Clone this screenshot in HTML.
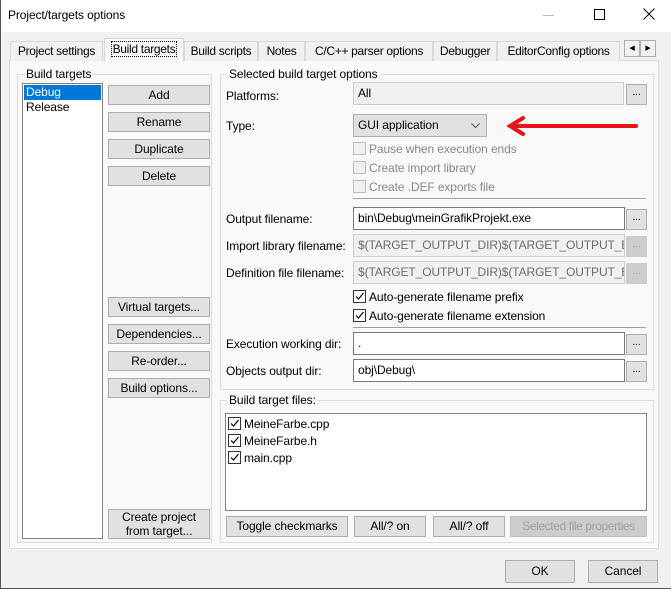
<!DOCTYPE html>
<html><head><meta charset="utf-8"><style>
*{box-sizing:border-box;margin:0;padding:0}
body{width:671px;height:589px;background:#f0f0f0;font-family:"Liberation Sans",sans-serif;font-size:12px;color:#000;position:relative;overflow:hidden;letter-spacing:-0.1px}
.a{position:absolute;white-space:nowrap}
.btn{position:absolute;background:#e1e1e1;border:1px solid #adadad;text-align:center;line-height:18px;white-space:nowrap}
.dis{color:#a0a0a0;background:#cccccc;border-color:#bfbfbf}
.grp{position:absolute;border:1px solid #dcdcdc}
.gl{position:absolute;background:#f9f9f9;padding:0 2px;top:-8px;left:6px;line-height:14px}
.in{position:absolute;background:#fff;border:1px solid #7a7a7a;height:23px;line-height:21px;padding-left:4px}
.ind{background:#f0f0f0;border-color:#cccccc;color:#6d6d6d}
.dot{position:absolute;width:21px;height:21px;background:#e1e1e1;border:1px solid #adadad;text-align:center;line-height:16px;font-size:10px}
.dotd{background:#cccccc;border-color:#cccccc;color:#a0a0a0}
.cb{position:absolute;width:13px;height:13px;border:1px solid #333;background:#fff}
.cbd{border-color:#bcbcbc;background:#f0f0f0}
.cb svg{position:absolute;left:0;top:0}
.tab{position:absolute;top:41px;height:20px;border:1px solid #d9d9d9;border-bottom:none;line-height:18px;text-align:center;background:#f0f0f0;overflow:hidden;white-space:nowrap;letter-spacing:-0.3px}
</style></head><body>
<div class="a" style="left:0;top:0;width:671px;height:32px;background:#fff"></div>
<div class="a" style="left:0;top:0;width:1px;height:589px;background:#555"></div>
<div class="a" style="left:0;top:588px;width:671px;height:1px;background:#555"></div>
<div class="a" style="left:8px;top:8px;font-size:12px">Project/targets options</div>
<div class="a" style="left:543px;top:15px;width:11px;height:1px;background:#bbb"></div>
<div class="a" style="left:594px;top:9px;width:11px;height:11px;border:1px solid #000"></div>
<svg class="a" style="left:643px;top:8px" width="12" height="12"><path d="M0.5 0.5 L11.5 11.5 M11.5 0.5 L0.5 11.5" stroke="#000" stroke-width="1"/></svg>

<div class="a" style="left:9px;top:60px;width:650px;height:489px;border:1px solid #d9d9d9;background:#f9f9f9"></div>
<div class="tab" style="left:10px;width:93px">Project settings</div>
<div class="tab" style="left:104px;width:80px;top:38px;height:24px;background:#f9f9f9;line-height:20px;z-index:2"><span style="border:1px dotted #000;padding:0 1px">Build targets</span></div>
<div class="tab" style="left:184px;width:74px">Build scripts</div>
<div class="tab" style="left:258px;width:47px">Notes</div>
<div class="tab" style="left:305px;width:128px">C/C++ parser options</div>
<div class="tab" style="left:433px;width:64px">Debugger</div>
<div class="tab" style="left:497px;width:123px">EditorConfig options</div>
<div class="a" style="left:624px;top:40px;width:16px;height:17px;border:1px solid #adadad;background:#f0f0f0;font-size:7px;text-align:center;line-height:15px">◀</div>
<div class="a" style="left:640px;top:40px;width:16px;height:17px;border:1px solid #adadad;background:#f0f0f0;font-size:7px;text-align:center;line-height:15px">▶</div>

<div class="grp" style="left:17px;top:74px;height:469px;width:195px"><div class="gl">Build targets</div></div>
<div class="a" style="left:22px;top:83px;width:81px;height:456px;background:#fff;border:1px solid #828282"></div>
<div class="a" style="left:24px;top:85px;width:77px;height:15px;background:#0078d7;color:#fff;padding-left:2px;line-height:15px">Debug</div>
<div class="a" style="left:26px;top:100px;line-height:15px">Release</div>
<div class="btn" style="left:108px;top:85px;width:102px;height:20px">Add</div>
<div class="btn" style="left:108px;top:112px;width:102px;height:20px">Rename</div>
<div class="btn" style="left:108px;top:139px;width:102px;height:20px">Duplicate</div>
<div class="btn" style="left:108px;top:166px;width:102px;height:20px">Delete</div>
<div class="btn" style="left:108px;top:297px;width:102px;height:20px">Virtual targets...</div>
<div class="btn" style="left:108px;top:324px;width:102px;height:20px">Dependencies...</div>
<div class="btn" style="left:108px;top:351px;width:102px;height:20px">Re-order...</div>
<div class="btn" style="left:108px;top:378px;width:102px;height:20px">Build options...</div>
<div class="btn" style="left:108px;top:509px;width:102px;height:30px;line-height:14px">Create project<br>from target...</div>

<div class="grp" style="left:220px;top:74px;width:434px;height:316px"><div class="gl">Selected build target options</div></div>
<div class="a" style="left:226px;top:89px">Platforms:</div>
<div class="in ind" style="left:353px;top:82px;width:271px;color:#000">All</div>
<div class="dot" style="left:626px;top:84px">...</div>
<div class="a" style="left:226px;top:119px">Type:</div>
<div class="a" style="left:353px;top:114px;width:134px;height:23px;background:#e1e1e1;border:1px solid #adadad;line-height:21px;padding-left:4px">GUI application<svg style="position:absolute;right:6px;top:8px" width="9" height="6"><path d="M0.5 0.5 L4.5 4.5 L8.5 0.5" fill="none" stroke="#555"/></svg></div>
<svg class="a" style="left:505px;top:116px" width="135" height="20"><line x1="10" y1="10" x2="131" y2="10" stroke="#e8141a" stroke-width="4" stroke-linecap="round"/><path d="M18 2 L5 10 L18 18" fill="none" stroke="#e8141a" stroke-width="4" stroke-linecap="round"/></svg>
<div class="cb cbd" style="left:353px;top:142px"></div><div class="a" style="left:369px;top:142px;color:#888">Pause when execution ends</div>
<div class="cb cbd" style="left:353px;top:161px"></div><div class="a" style="left:369px;top:161px;color:#888">Create import library</div>
<div class="cb cbd" style="left:353px;top:180px"></div><div class="a" style="left:369px;top:180px;color:#888">Create .DEF exports file</div>
<div class="a" style="left:353px;top:198px;width:293px;height:1px;background:#a0a0a0"></div>
<div class="a" style="left:226px;top:212px">Output filename:</div>
<div class="in" style="left:353px;top:207px;width:272px">bin\Debug\meinGrafikProjekt.exe</div>
<div class="dot" style="left:626px;top:209px">...</div>
<div class="a" style="left:226px;top:239px">Import library filename:</div>
<div class="in ind" style="left:353px;top:234px;width:272px;overflow:hidden">$(TARGET_OUTPUT_DIR)$(TARGET_OUTPUT_BASEN</div>
<div class="dot dotd" style="left:626px;top:236px">...</div>
<div class="a" style="left:226px;top:266px">Definition file filename:</div>
<div class="in ind" style="left:353px;top:261px;width:272px;overflow:hidden">$(TARGET_OUTPUT_DIR)$(TARGET_OUTPUT_BASEN</div>
<div class="dot dotd" style="left:626px;top:263px">...</div>
<div class="cb" style="left:353px;top:290px"><svg width="11" height="11"><path d="M2 5.5 L4.5 8 L9.5 2" fill="none" stroke="#000" stroke-width="1.2"/></svg></div><div class="a" style="left:369px;top:290px">Auto-generate filename prefix</div>
<div class="cb" style="left:353px;top:309px"><svg width="11" height="11"><path d="M2 5.5 L4.5 8 L9.5 2" fill="none" stroke="#000" stroke-width="1.2"/></svg></div><div class="a" style="left:369px;top:309px">Auto-generate filename extension</div>
<div class="a" style="left:353px;top:327px;width:293px;height:1px;background:#a0a0a0"></div>
<div class="a" style="left:226px;top:337px">Execution working dir:</div>
<div class="in" style="left:353px;top:332px;width:272px">.</div>
<div class="dot" style="left:626px;top:334px">...</div>
<div class="a" style="left:226px;top:364px">Objects output dir:</div>
<div class="in" style="left:353px;top:359px;width:272px">obj\Debug\</div>
<div class="dot" style="left:626px;top:361px">...</div>

<div class="grp" style="left:220px;top:400px;width:434px;height:143px"><div class="gl">Build target files:</div></div>
<div class="a" style="left:225px;top:413px;width:422px;height:98px;background:#fff;border:1px solid #828282"></div>
<div class="cb" style="left:228px;top:417px"><svg width="11" height="11"><path d="M2 5.5 L4.5 8 L9.5 2" fill="none" stroke="#000" stroke-width="1.2"/></svg></div><div class="a" style="left:244px;top:417px">MeineFarbe.cpp</div>
<div class="cb" style="left:228px;top:434px"><svg width="11" height="11"><path d="M2 5.5 L4.5 8 L9.5 2" fill="none" stroke="#000" stroke-width="1.2"/></svg></div><div class="a" style="left:244px;top:434px">MeineFarbe.h</div>
<div class="cb" style="left:228px;top:451px"><svg width="11" height="11"><path d="M2 5.5 L4.5 8 L9.5 2" fill="none" stroke="#000" stroke-width="1.2"/></svg></div><div class="a" style="left:244px;top:451px">main.cpp</div>
<div class="btn" style="left:226px;top:516px;width:122px;height:21px">Toggle checkmarks</div>
<div class="btn" style="left:354px;top:516px;width:72px;height:21px">All/? on</div>
<div class="btn" style="left:433px;top:516px;width:72px;height:21px">All/? off</div>
<div class="btn dis" style="left:510px;top:516px;width:137px;height:21px;letter-spacing:-0.4px">Selected file properties</div>

<div class="btn" style="left:505px;top:560px;width:70px;height:23px;line-height:21px">OK</div>
<div class="btn" style="left:588px;top:560px;width:70px;height:23px;line-height:21px">Cancel</div>
</body></html>
